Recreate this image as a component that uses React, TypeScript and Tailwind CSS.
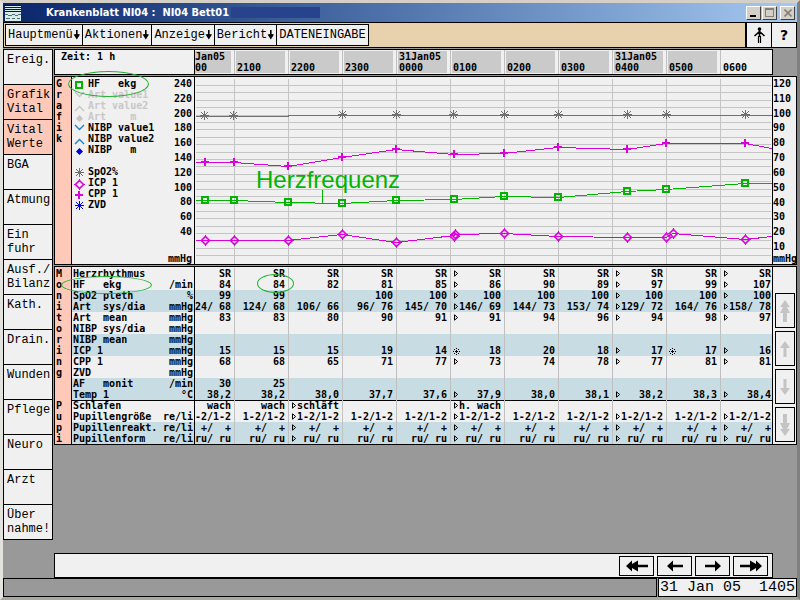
import React from "react";

const MONO = "font-['Liberation_Mono',monospace]";
const BOLD = "font-['DejaVu_Sans_Mono',monospace] font-bold text-[10px] leading-[11px] whitespace-pre";
const TIME_GRID = "grid-cols-[39fr_repeat(9,54fr)_52fr]";
const ROW_GRID = "grid-cols-[16px_124px_39fr_repeat(9,54fr)_52fr]";

const MENUS = ["Hauptmenü", "Aktionen", "Anzeige", "Bericht"];

const TABS: { lines: string[]; active?: boolean }[] = [
  { lines: ["Ereig."] },
  { lines: ["Grafik", "Vital"], active: true },
  { lines: ["Vital", "Werte"], active: true },
  { lines: ["BGA"] },
  { lines: ["Atmung"] },
  { lines: ["Ein", "fuhr"] },
  { lines: ["Ausf./", "Bilanz"] },
  { lines: ["Kath."] },
  { lines: ["Drain."] },
  { lines: ["Wunden"] },
  { lines: ["Pflege"] },
  { lines: ["Neuro"] },
  { lines: ["Arzt"] },
  { lines: ["Über", "nahme!"] },
];

const TIMES: [string, string][] = [
  ["Jan05", "00"],
  ["", "2100"],
  ["", "2200"],
  ["", "2300"],
  ["31Jan05", "0000"],
  ["", "0100"],
  ["", "0200"],
  ["", "0300"],
  ["31Jan05", "0400"],
  ["", "0500"],
  ["", "0600"],
];

type Shape = "square" | "down" | "up" | "dot" | "star" | "diamond" | "plus";

const LEGEND: { text: string; shape?: Shape; color?: string; dim?: boolean; dy?: number }[] = [
  { text: "HF   ekg", shape: "square", color: "#00b400", dy: 2 },
  { text: "Art value1", shape: "down", color: "#c4c4c4", dim: true },
  { text: "Art value2", shape: "up", color: "#c4c4c4", dim: true, dy: 4 },
  { text: "Art    m", shape: "dot", color: "#c4c4c4", dim: true, dy: 2 },
  { text: "NIBP value1", shape: "down", color: "#2080c8" },
  { text: "NIBP value2", shape: "up", color: "#2080c8", dy: 4 },
  { text: "NIBP   m", shape: "dot", color: "#0000d8", dy: 2 },
  { text: "" },
  { text: "SpO2%", shape: "star", color: "#707070", dy: 1 },
  { text: "ICP 1", shape: "diamond", color: "#dc00dc", dy: 2 },
  { text: "CPP 1", shape: "plus", color: "#dc00dc", dy: 2 },
  { text: "ZVD", shape: "star", color: "#0000d8", dy: 1 },
];

const LEFT_SCALE = [240, 220, 200, 180, 160, 140, 120, 100, 80, 60, 40];
const RIGHT_SCALE = [120, 110, 100, 90, 80, 70, 60, 50, 40, 30, 20, 10];

type Row = { label: string; unit: string; blue?: boolean; cells: string[]; marks?: string };

// marks: one character per time column, ">" for a triangle and "*" for a star
const MONITORING: Row[] = [
  { label: "Herzrhythmus", unit: "", cells: ["SR", "SR", "SR", "SR", "SR", "SR", "SR", "SR", "SR", "SR", "SR"], marks: "     >  > >" },
  { label: "HF   ekg", unit: "/min", cells: ["84", "84", "82", "81", "85", "86", "90", "89", "97", "99", "107"], marks: "     >  > >" },
  { label: "SpO2 pleth", unit: "%", blue: true, cells: ["99", "99", "", "100", "100", "100", "100", "100", "100", "100", "100"], marks: "     >  > >" },
  { label: "Art  sys/dia", unit: "mmHg", blue: true, cells: ["24/ 68", "124/ 68", "106/ 66", "96/ 76", "145/ 70", "146/ 69", "144/ 73", "153/ 74", "129/ 72", "164/ 76", "158/ 78"], marks: "     >  > >" },
  { label: "Art  mean", unit: "mmHg", cells: ["83", "83", "80", "90", "91", "91", "94", "96", "94", "98", "97"], marks: "     >  > >" },
  { label: "NIBP sys/dia", unit: "mmHg", cells: ["", "", "", "", "", "", "", "", "", "", ""] },
  { label: "NIBP mean", unit: "mmHg", blue: true, cells: ["", "", "", "", "", "", "", "", "", "", ""] },
  { label: "ICP 1", unit: "mmHg", blue: true, cells: ["15", "15", "15", "19", "14", "18", "20", "18", "17", "17", "16"], marks: "     *  >*>" },
  { label: "CPP 1", unit: "mmHg", cells: ["68", "68", "65", "71", "77", "73", "74", "78", "77", "81", "81"], marks: "     >  > >" },
  { label: "ZVD", unit: "mmHg", cells: ["", "", "", "", "", "", "", "", "", "", ""] },
  { label: "AF   monit", unit: "/min", blue: true, cells: ["30", "25", "", "", "", "", "", "", "", "", ""] },
  { label: "Temp 1", unit: "°C", blue: true, cells: ["38,2", "38,2", "38,0", "37,7", "37,6", "37,9", "38,0", "38,1", "38,2", "38,3", "38,4"], marks: "     >  > >" },
];

const PUPIL: Row[] = [
  { label: "Schlafen", unit: "", cells: ["wach", "wach", "schläft", "", "", "h. wach", "", "", "", "", ""], marks: "  >  >" },
  { label: "Pupillengröße", unit: "re/li", cells: ["-2/1-2", ...Array(10).fill("1-2/1-2")], marks: "  >  >  > >" },
  { label: "Pupillenreakt.", unit: "re/li", blue: true, cells: Array(11).fill("+/  +"), marks: "  >  >  > >" },
  { label: "Pupillenform", unit: "re/li", blue: true, cells: Array(11).fill("ru/ ru"), marks: "  >  >  > >" },
];

function Mark({ shape, x, y, color }: { shape: Shape; x: number; y: number; color: string }) {
  const p = { stroke: color, fill: "none" };
  return (
    <g transform={`translate(${x} ${y})`}>
      {shape === "square" && <rect x={-3} y={-3} width={6} height={6} strokeWidth={2} {...p} />}
      {shape === "down" && <path d="M-4 -2 L0.5 2.5 L5 -2" strokeWidth={1.4} {...p} />}
      {shape === "up" && <path d="M-4 2 L0.5 -2.5 L5 2" strokeWidth={1.4} {...p} />}
      {shape === "dot" && <path d="M0.5 -3 L4 0.5 L0.5 4 L-3 0.5 Z" fill={color} />}
      {shape === "star" && <path d="M-4 0.5 H5 M0.5 -4 V5 M-3 -3 L4 4 M4 -3 L-3 4" strokeWidth={1} {...p} />}
      {shape === "diamond" && (
        <>
          <path d="M0.5 -3.5 L4.5 0.5 L0.5 4.5 L-3.5 0.5 Z" strokeWidth={1.6} {...p} />
          <path d="M0.5 -5 V-3 M0.5 4 V6 M-5 0.5 H-3 M4 0.5 H6" strokeWidth={1} {...p} />
        </>
      )}
      {shape === "plus" && <path d="M-4 0 H4 M0 -4 V4" strokeWidth={2} {...p} />}
    </g>
  );
}

const SERIES: { shape: Shape; color: string; line: string; points: [number, number][] }[] = [
  {
    shape: "star",
    color: "#707070",
    line: "0,39.5 92,39.5 92,38.5 576,38.5",
    points: [[8, 38], [37, 38], [146, 37], [200, 37], [257, 37], [308, 37], [362, 37], [431, 37], [470, 37], [549, 37]],
  },
  {
    shape: "plus",
    color: "#dc00dc",
    line: "0,85.5 38,85.5 92,89.5 146,80.5 200,72.5 258,77.5 308,76.5 362,70.5 431,72.5 470,66.5 549,66.5 576,71.5",
    points: [[9, 85], [38, 85], [92, 89], [146, 80], [200, 72], [258, 77], [308, 76], [362, 70], [431, 72], [470, 66], [549, 66]],
  },
  {
    shape: "square",
    color: "#00b400",
    line: "0,123.5 38,123.5 92,125.5 146,126.5 200,123.5 258,122.5 308,119.5 362,120.5 431,114.5 470,112.5 549,106.5 576,106.5",
    points: [[9, 123], [38, 123], [92, 125], [146, 126], [200, 123], [258, 122], [308, 119], [362, 120], [431, 114], [470, 112], [549, 106]],
  },
  {
    shape: "diamond",
    color: "#dc00dc",
    line: "0,163.5 92,163.5 146,157.5 200,165.5 258,158.5 259,157.5 308,156.5 362,159.5 431,160.5 470,160.5 477,156.5 549,162.5 576,159.5",
    points: [[9, 163], [38, 163], [92, 163], [146, 157], [200, 165], [258, 159], [259, 157], [308, 156], [362, 159], [431, 160], [470, 160], [477, 156], [549, 162]],
  },
];

function Chart() {
  return (
    <svg className="block h-[187px] w-full" viewBox="-1 0 577 187" preserveAspectRatio="none" role="img" aria-label="Grafik Vital">
      <g stroke="#c4c4c4" shapeRendering="crispEdges">
        {Array.from({ length: 24 }, (_, i) => {
          const y = Math.round(8 + i * 7.4) + 0.5;
          return <line key={i} x1={0} x2={575} y1={y} y2={y} />;
        })}
        {Array.from({ length: 10 }, (_, i) => (
          <line key={i} x1={38.5 + i * 54} x2={38.5 + i * 54} y1={2} y2={187} />
        ))}
      </g>
      {SERIES.map((s) => (
        <g key={s.line} shapeRendering={s.shape === "diamond" ? "auto" : "crispEdges"}>
          <polyline points={s.line} fill="none" stroke={s.color} shapeRendering="crispEdges" />
          {s.points.map(([x, y]) => (
            <Mark key={`${x}-${y}`} shape={s.shape} x={x} y={y} color={s.color} />
          ))}
        </g>
      ))}
      <line x1={126.5} x2={126.5} y1={113} y2={126} stroke="#00b400" shapeRendering="crispEdges" />
    </svg>
  );
}

function CellMark({ kind }: { kind?: string }) {
  if (kind === ">")
    return (
      <svg className="mt-[2px] h-[7px] w-[6px] shrink-0" viewBox="0 0 6 7" fill="none" stroke="#000">
        <path d="M1.5 0.8 V6.2 L4.6 3.5 Z" />
      </svg>
    );
  if (kind === "*")
    return (
      <svg className="mt-[3px] h-[7px] w-[7px] shrink-0" viewBox="0 0 7 7" shapeRendering="crispEdges" fill="#000">
        <path d="M3 0h1v1h-1zM1 1h1v1h-1zM5 1h1v1h-1zM3 2h1v1h-1zM0 3h1v1h-1zM2 3h3v1h-3zM6 3h1v1h-1zM3 4h1v1h-1zM1 5h1v1h-1zM5 5h1v1h-1zM3 6h1v1h-1z" />
      </svg>
    );
  return null;
}

function DataRow({ row, letter, last, ringLabel }: { row: Row; letter?: string; last?: boolean; ringLabel?: boolean }) {
  return (
    <tr className={`grid h-[11px] ${ROW_GRID} ${row.blue ? "bg-[#c8dce4]" : "bg-[#f0f0f0]"}`}>
      <td className={`bg-[#ffc9b9] pl-px ${last ? "border-b border-black" : ""}`}>{letter}</td>
      <th
        scope="row"
        className={`relative flex justify-between border-x border-black pr-px pl-px text-left ${last ? "border-b" : ""}`}
      >
        <span>{row.label}</span>
        <span>{row.unit}</span>
        {ringLabel && <i className="absolute -top-[3px] -left-[11px] z-10 h-[18px] w-[91px] rounded-[50%] border border-[#20b030]" />}
      </th>
      {row.cells.map((c, i) => (
        <td
          key={i}
          className={`relative flex min-w-0 ${i === 0 ? "" : "border-l border-[#c0c0c0] pl-[2px]"} ${
            last ? "border-b border-b-black" : ""
          }`}
        >
          {i > 0 && <CellMark kind={row.marks?.[i]} />}
          <span className={`flex flex-1 justify-end ${i === 10 ? "pr-px" : "pr-[3px]"}`}>{c}</span>
          {ringLabel && i === 1 && (
            <i className="absolute -top-[5px] left-[22px] z-10 h-[19px] w-[37px] rounded-[50%] border border-[#20b030]" />
          )}
        </td>
      ))}
    </tr>
  );
}

function ScrollArrow({ kind }: { kind: "first" | "up" | "down" | "last" }) {
  const double = kind === "first" || kind === "last";
  const flip = kind === "down" || kind === "last";
  return (
    <svg className="h-[26px] w-[12px]" viewBox="0 0 12 26" fill="#c4c4c4">
      <g transform={flip ? "rotate(180 6 13)" : undefined}>
        {double ? (
          <path d="M6 2 L11 9 H8 L11 15 H8 V24 H4 V15 H1 L4 9 H1 Z" />
        ) : (
          <path d="M6 5 L11 12 H7.5 V21 H4.5 V12 H1 Z" />
        )}
      </g>
    </svg>
  );
}

function NavArrow({ double, right }: { double?: boolean; right?: boolean }) {
  return (
    <svg className="h-[12px] w-[24px]" viewBox="0 0 24 12" fill="#000">
      <g transform={right ? "rotate(180 12 6)" : undefined}>
        {double ? (
          <path d="M1 6 L7 0.5 V4 L13 0.5 V4.7 H23 V7.3 H13 V11.5 L7 8 V11.5 Z" />
        ) : (
          <path d="M4 6 L10 0.5 V4.7 H20 V7.3 H10 V11.5 Z" />
        )}
      </g>
    </svg>
  );
}

const WIN_BTN =
  "flex h-[14px] w-[15px] items-center justify-center border border-t-white border-l-white border-r-[#404040] border-b-[#404040] bg-[#d4d0c8]";

function TitleBar() {
  return (
    <header className="flex h-[19px] items-center bg-gradient-to-r from-[#0a246a] to-[#a6caf0] pl-[2px] pr-[2px]">
      <svg className="h-[16px] w-[16px] shrink-0" viewBox="0 0 16 16" shapeRendering="crispEdges">
        <rect width={16} height={16} fill="#d8ecec" />
        <path d="M0 0h16v1H0zM0 2h16v1H0zM0 4h16v1H0zM0 6h16v1H0z" fill="#101820" />
        <path d="M0 9h3v1h4v-1h3v1h3v-1h3v1h-3v1h-3v-1H7v1H3v-1H0zM1 13h4v1H1zM7 13h3v1H7zM12 13h3v1h-3z" fill="#507078" />
      </svg>
      <h1 className="ml-[25px] font-['DejaVu_Sans_Condensed','DejaVu_Sans',sans-serif] text-[11px] leading-[18px] font-bold whitespace-pre text-white">
        Krankenblatt NI04 :  NI04 Bett01
      </h1>
      <div className="ml-[2px] h-[11px] w-[89px] bg-[#27438c]" />
      <div className="ml-auto flex">
        <button className={WIN_BTN} aria-label="Minimieren">
          <span className="mt-[6px] mr-[2px] h-[2px] w-[6px] bg-black" />
        </button>
        <button className={`${WIN_BTN} ml-px`} aria-label="Maximieren">
          <span className="h-[9px] w-[9px] border border-t-2 border-[#868078]" />
        </button>
        <button className={`${WIN_BTN} ml-[3px]`} aria-label="Schließen">
          <svg className="h-[8px] w-[8px]" viewBox="0 0 8 8" stroke="#868078" strokeWidth={1.6}>
            <path d="M0.5 0.5 L7.5 7.5 M7.5 0.5 L0.5 7.5" />
          </svg>
        </button>
      </div>
    </header>
  );
}

function Toolbar() {
  return (
    <nav className={`flex h-[26px] border border-black bg-[#e8d2ae] ${MONO} text-[12px]`}>
      <div className="my-px ml-px flex border-l border-black">
        {MENUS.map((m) => (
          <button key={m} className="flex items-center border-y border-r border-black bg-[#f0f0f0] px-[2px]">
            {m}
            <svg className="h-[10px] w-[7px]" viewBox="0 0 7 10">
              <path d="M3 0 H4.6 V4 L7 4.5 L3.8 9.5 L0.6 4.5 L3 4 Z" />
            </svg>
          </button>
        ))}
        <button className="flex items-center border-y border-r border-black bg-[#f0f0f0] px-[2px]">DATENEINGABE</button>
      </div>
      <div className="ml-auto flex">
        <button className="flex w-[26px] items-center justify-center border-l-2 border-black bg-[#f0f0f0]" aria-label="Patient">
          <svg className="h-[17px] w-[13px]" viewBox="0 0 13 17" fill="none" stroke="#000">
            <circle cx={6.5} cy={2} r={1.8} fill="#000" stroke="none" />
            <path d="M6.5 3 V10 M6.5 4.5 L1.5 9 M6.5 4.5 L11.5 9" strokeWidth={1.6} />
            <path d="M5.5 9 V16 M7.5 9 V16" strokeWidth={1.2} />
          </svg>
        </button>
        <button className="w-[25px] border-l border-black bg-[#f0f0f0] font-['DejaVu_Sans',sans-serif] text-[14px] font-bold" aria-label="Hilfe">
          ?
        </button>
      </div>
    </nav>
  );
}

export default function App() {
  return (
    <div className="flex min-h-screen flex-col border-[3px] border-t-[#d4d0c8] border-r-[#808080] border-b-[#a8a8a0] border-l-[#e4e2dc] bg-[#999] text-black">
      <TitleBar />
      <Toolbar />
      <div className="mt-px flex flex-1 items-stretch">
        <nav className={`w-[50px] shrink-0 self-start border-x border-t border-black ${MONO} text-[12px] leading-[14px]`}>
          {TABS.map((t) => (
            <button
              key={t.lines.join()}
              className={`block h-[35px] w-full border-b border-black pl-[3px] text-left ${t.active ? "bg-[#ffc9b9]" : "bg-[#f0f0f0]"}`}
            >
              <span className="flex h-full flex-col pt-[3px]">
                {t.lines.map((l) => (
                  <span key={l}>{l}</span>
                ))}
              </span>
            </button>
          ))}
        </nav>

        <main className={`ml-px flex min-w-0 flex-1 flex-col gap-px ${BOLD}`}>
          <section className="mr-[24px] flex h-[26px] border border-black bg-[#f0f0f0]">
            <div className="w-[140px] shrink-0 border-r border-black pt-px pl-[6px]">Zeit: 1 h</div>
            <div className={`grid flex-1 ${TIME_GRID}`}>
              {TIMES.map(([d, t], i) => (
                <div key={i} className={`flex min-w-0 ${i === 0 ? "" : "border-l border-[#c0c0c0] pl-px"} py-px`}>
                  <div
                    className={`flex flex-1 flex-col ${
                      i === 0 ? "mr-[3px] bg-[#cacaca]" : i === 10 ? "pl-px" : "mr-[3px] bg-[#cacaca] pl-px"
                    }`}
                  >
                    <span className="h-[11px]">{d}</span>
                    <span className="h-[11px]">{t}</span>
                  </div>
                </div>
              ))}
            </div>
          </section>

          <section className="flex h-[189px] border border-black bg-[#f0f0f0]">
            <div className="flex w-[16px] shrink-0 flex-col bg-[#ffc9b9] pt-px pl-px">
              {"Grafik".split("").map((c, i) => (
                <span key={i}>{c}</span>
              ))}
            </div>
            <div className="relative flex w-[124px] shrink-0 justify-between border-x border-black pt-px pr-[2px] pl-[2px]">
              <ul>
                {LEGEND.map((l, i) => (
                  <li key={i} className={`flex h-[11px] ${l.dim ? "text-[#c8c8c8]" : ""}`}>
                    <svg className="h-[11px] w-[14px] shrink-0 overflow-visible" viewBox="0 0 14 11">
                      {l.shape && <Mark shape={l.shape} x={5} y={5 + (l.dy ?? 0)} color={l.color!} />}
                    </svg>
                    {l.text}
                  </li>
                ))}
              </ul>
              <i className="absolute -top-[6px] -left-[4px] z-10 h-[26px] w-[81px] rounded-[50%] border border-[#20b030]" />
              <div className="flex flex-col text-right">
                <div className="flex h-[159px] flex-col justify-between">
                  {LEFT_SCALE.map((n) => (
                    <span key={n}>{n}</span>
                  ))}
                </div>
                <span className="mt-auto">mmHg</span>
              </div>
            </div>
            <div className="relative min-w-0 flex-1">
              <Chart />
              <span className="absolute top-[89px] left-[61px] font-['Liberation_Sans',sans-serif] text-[24px] leading-[28px] font-normal text-[#00b400]">
                Herzfrequenz
              </span>
            </div>
            <div className="flex w-[24px] shrink-0 flex-col border-l border-black pt-px">
              <div className="flex h-[174px] flex-col justify-between">
                {RIGHT_SCALE.map((n) => (
                  <span key={n}>{n}</span>
                ))}
              </div>
              <span className="mt-auto">mmHg</span>
            </div>
          </section>

          <section className="flex border border-black bg-[#f0f0f0]">
            <table className="block min-w-0 flex-1">
              <tbody className="block">
                <tr className={`grid h-px ${ROW_GRID}`}>
                  <td className="bg-[#ffc9b9]" />
                  <td className="border-x border-black" />
                </tr>
                {MONITORING.map((r, i) => (
                  <DataRow key={r.label} row={r} letter={"Monitoring"[i]} last={i === 11} ringLabel={i === 1} />
                ))}
                {PUPIL.map((r, i) => (
                  <DataRow key={r.label} row={r} letter={"Pupi"[i]} />
                ))}
              </tbody>
            </table>
            <div className="flex w-[24px] shrink-0 flex-col items-center justify-end gap-[3px] border-l border-black pb-[2px]">
              {(["first", "up", "down", "last"] as const).map((k) => (
                <button key={k} aria-label={k} className="flex h-[35px] w-[20px] items-center justify-center border border-black">
                  <ScrollArrow kind={k} />
                </button>
              ))}
            </div>
          </section>

          <section className="mt-auto mr-[24px] flex h-[25px] items-center justify-end gap-[3px] border border-black bg-[#f0f0f0] pr-[4px]">
            <button aria-label="Anfang" className="flex h-[20px] w-[35px] items-center justify-center border border-black">
              <NavArrow double />
            </button>
            <button aria-label="Zurück" className="flex h-[20px] w-[35px] items-center justify-center border border-black">
              <NavArrow />
            </button>
            <button aria-label="Weiter" className="flex h-[20px] w-[35px] items-center justify-center border border-black">
              <NavArrow right />
            </button>
            <button aria-label="Ende" className="flex h-[20px] w-[35px] items-center justify-center border border-black">
              <NavArrow double right />
            </button>
          </section>
        </main>
      </div>
      <footer className={`flex h-[19px] gap-px ${MONO} text-[15px] leading-[17px]`}>
        <div className="flex-1 border border-black" />
        <div className="w-[139px] border border-black bg-[#f0f0f0] pl-px whitespace-pre">31 Jan 05  1405</div>
      </footer>
    </div>
  );
}
